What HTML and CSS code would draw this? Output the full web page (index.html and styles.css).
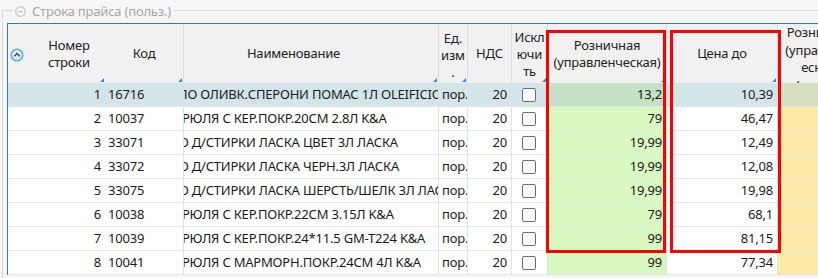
FILE: index.html
```html
<!DOCTYPE html>
<html lang="ru">
<head>
<meta charset="utf-8">
<title>Строка прайса</title>
<link rel="stylesheet" href="styles.css">
</head>
<body>
<div class="group">
  <div class="legend">
    <svg class="collapse" width="11" height="11" viewBox="0 0 11 11"><circle cx="5.5" cy="5.5" r="4.8" fill="none" stroke="#c4c4c4" stroke-width="1.2"/><line x1="3" y1="5.5" x2="8" y2="5.5" stroke="#c4c4c4" stroke-width="1.2"/></svg>
    <span class="legend-text">Строка прайса (польз.)</span>
  </div>
  <div class="grid">
    <div class="row head">
      <div class="c ind"><svg width="14" height="14" viewBox="0 0 14 14"><circle cx="7" cy="7" r="5.8" fill="#e6e6e6" stroke="#4fb4ec" stroke-width="1.6"/><path d="M4.4 8.3 L7 5.6 L9.6 8.3" fill="none" stroke="#4a4a4a" stroke-width="1.5"/></svg></div>
      <div class="c num sort">Номер<br>строки</div>
      <div class="c code sort">Код</div>
      <div class="c name sort">Наименование</div>
      <div class="c unit sort">Ед.<br>изм<br>.</div>
      <div class="c vat">НДС</div>
      <div class="c excl sort">Искл<br>ючи<br>ть</div>
      <div class="c retail sort">Розничная<br>(управленческая)</div>
      <div class="c price sort">Цена до</div>
      <div class="c last top">Розничная<br>(управленч<br>еская)<br>(старая)</div>
    </div>
    <div class="row sel">
      <div class="c ind"></div><div class="c num">1</div><div class="c code">16716</div>
      <div class="c name"><span>МАСЛО ОЛИВК.СПЕРОНИ ПОМАС 1Л OLEIFICIO</span></div>
      <div class="c unit">пор.</div><div class="c vat">20</div><div class="c excl"><span class="cb"></span></div>
      <div class="c retail">13,2</div><div class="c price">10,39</div><div class="c last"></div>
    </div>
    <div class="row">
      <div class="c ind"></div><div class="c num">2</div><div class="c code">10037</div>
      <div class="c name"><span>КАСТРЮЛЯ С КЕР.ПОКР.20СМ 2.8Л K&amp;A</span></div>
      <div class="c unit">пор.</div><div class="c vat">20</div><div class="c excl"><span class="cb"></span></div>
      <div class="c retail">79</div><div class="c price">46,47</div><div class="c last"></div>
    </div>
    <div class="row">
      <div class="c ind"></div><div class="c num">3</div><div class="c code">33071</div>
      <div class="c name"><span>СР-ВО Д/СТИРКИ ЛАСКА ЦВЕТ 3Л ЛАСКА</span></div>
      <div class="c unit">пор.</div><div class="c vat">20</div><div class="c excl"><span class="cb"></span></div>
      <div class="c retail">19,99</div><div class="c price">12,49</div><div class="c last"></div>
    </div>
    <div class="row">
      <div class="c ind"></div><div class="c num">4</div><div class="c code">33072</div>
      <div class="c name"><span>СР-ВО Д/СТИРКИ ЛАСКА ЧЕРН.3Л ЛАСКА</span></div>
      <div class="c unit">пор.</div><div class="c vat">20</div><div class="c excl"><span class="cb"></span></div>
      <div class="c retail">19,99</div><div class="c price">12,08</div><div class="c last"></div>
    </div>
    <div class="row">
      <div class="c ind"></div><div class="c num">5</div><div class="c code">33075</div>
      <div class="c name"><span>СР-ВО Д/СТИРКИ ЛАСКА ШЕРСТЬ/ШЕЛК 3Л ЛАСКА</span></div>
      <div class="c unit">пор.</div><div class="c vat">20</div><div class="c excl"><span class="cb"></span></div>
      <div class="c retail">19,99</div><div class="c price">19,98</div><div class="c last"></div>
    </div>
    <div class="row">
      <div class="c ind"></div><div class="c num">6</div><div class="c code">10038</div>
      <div class="c name"><span>КАСТРЮЛЯ С КЕР.ПОКР.22СМ 3.15Л K&amp;A</span></div>
      <div class="c unit">пор.</div><div class="c vat">20</div><div class="c excl"><span class="cb"></span></div>
      <div class="c retail">79</div><div class="c price">68,1</div><div class="c last"></div>
    </div>
    <div class="row">
      <div class="c ind"></div><div class="c num">7</div><div class="c code">10039</div>
      <div class="c name"><span>КАСТРЮЛЯ С КЕР.ПОКР.24*11.5 GM-T224 K&amp;A</span></div>
      <div class="c unit">пор.</div><div class="c vat">20</div><div class="c excl"><span class="cb"></span></div>
      <div class="c retail">99</div><div class="c price">81,15</div><div class="c last"></div>
    </div>
    <div class="row">
      <div class="c ind"></div><div class="c num">8</div><div class="c code">10041</div>
      <div class="c name"><span>КАСТРЮЛЯ С МАРМОРН.ПОКР.24СМ 4Л K&amp;A</span></div>
      <div class="c unit">пор.</div><div class="c vat">20</div><div class="c excl"><span class="cb"></span></div>
      <div class="c retail">99</div><div class="c price">77,34</div><div class="c last"></div>
    </div>
  </div>
</div>
<div class="mark mark-retail"></div>
<div class="mark mark-price"></div>
</body>
</html>
```
FILE: styles.css
```css
html, body {
  margin: 0;
  padding: 0;
  width: 818px;
  height: 278px;
  overflow: hidden;
  background: #f6f6f6;
  font-family: "Noto Sans", "Open Sans", sans-serif;
  font-size: 13px;
  letter-spacing: -0.2px;
  color: #1a1a1a;
}

.group {
  margin: 10px 0 0 2px;
  border-top: 1px solid #dadada;
  border-left: 1px solid #dadada;
  height: 300px;
  width: 1000px;
}

.legend {
  display: inline-flex;
  align-items: center;
  gap: 6px;
  margin: -10px 0 0 10px;
  padding: 0 3px 0 2px;
  height: 20px;
  background: #f6f6f6;
  color: #a6a6a6;
  vertical-align: top;
}

.grid {
  margin: -6px 0 0 4px;
  border-top: 1px solid #2f7ca6;
  border-left: 1px solid #2f7ca6;
  width: 960px;
  background: #ffffff;
}

.row {
  display: flex;
  height: 24px;
  border-bottom: 1px solid #e4e4e4;
  box-sizing: border-box;
}

.c {
  box-sizing: border-box;
  flex: none;
  display: flex;
  align-items: center;
  white-space: nowrap;
  overflow: hidden;
  line-height: 17px;
  position: relative;
}

.ind { width: 20px; }
.num { width: 77px; justify-content: flex-end; padding-right: 4px; }
.code { width: 79px; padding-left: 3px; border-right: 1px solid #e2e2e2; }
.name { width: 255px; border-right: 1px solid #e2e2e2; }
.name span { margin-left: -33px; }
.unit { width: 29px; padding-left: 3px; border-right: 1px solid #e2e2e2; }
.vat { width: 44px; justify-content: flex-end; padding-right: 4px; border-right: 1px solid #e2e2e2; }
.excl { width: 36px; justify-content: center; border-right: 1px solid #e2e2e2; }
.retail { width: 119px; justify-content: flex-end; padding-right: 4px; border-right: 1px solid #e2e2e2; background: #d8f8c2; }
.price { width: 111px; justify-content: flex-end; padding-right: 4px; border-right: 1px solid #e2e2e2; }
.last { width: 84px; background: #fde9a8; }

.cb {
  width: 14px;
  height: 14px;
  box-sizing: border-box;
  border: 1px solid #6e6e6e;
  border-radius: 2px;
  background: #ffffff;
  margin-right: 2px;
}

.sel { background: #d4e5ea; }
.sel .retail { background: #c3e2c7; }
.sel .last { background: #d6dfbf; }

.head {
  height: 59px;
  background: #f1f1f1;
  border-bottom: none;
  color: #222222;
}
.head .c {
  justify-content: center;
  text-align: center;
  background: #f1f1f1;
  border-right-color: #dedede;
}
.head .num { padding-right: 0; padding-left: 5px; }
.head .code { padding-left: 0; }
.head .name { padding-right: 35px; }
.head .unit { padding-left: 0; padding-top: 3px; }
.head .vat { padding-right: 0; }
.head .excl { padding-top: 2px; }
.head .retail { padding-right: 0; }
.head .price { padding-right: 0; }
.head .ind { justify-content: flex-start; padding-left: 2px; padding-top: 3px; }
.head .top { align-items: flex-start; padding-top: 0; line-height: 17.5px; }

.sort::after {
  content: "";
  position: absolute;
  right: 1px;
  bottom: 1px;
  width: 0;
  height: 0;
  border-left: 4px solid transparent;
  border-bottom: 4px solid #2e8fd6;
}

.mark {
  position: absolute;
  top: 30px;
  height: 223px;
  box-sizing: border-box;
  border: 3px solid #ff0000;
}
.mark-retail { left: 546px; width: 120px; }
.mark-price { left: 670px; width: 111px; }
```
